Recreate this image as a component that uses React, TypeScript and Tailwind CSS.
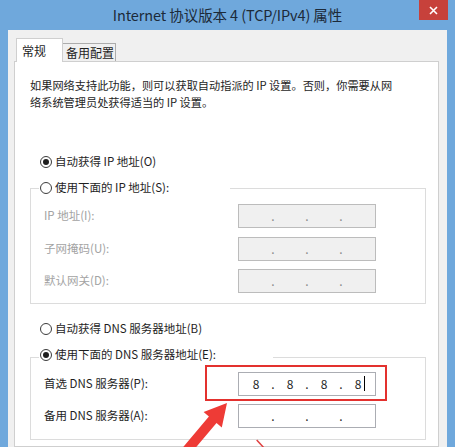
import React from "react";

const FONT = { fontFamily: '"Noto Sans CJK SC", "Noto Sans", sans-serif' };

function Radio({ checked }: { checked: boolean }) {
  return (
    <span className="w-[12px] h-[12px] rounded-full border border-[#3c3c3c] bg-white flex items-center justify-center shrink-0">
      {checked && <span className="w-[6px] h-[6px] rounded-full bg-[#1e1e1e]" />}
    </span>
  );
}

function IpBox({ values, disabled }: { values?: string[]; disabled?: boolean }) {
  const v = values ?? ["", "", "", ""];
  const dotColor = disabled ? "text-[#8a8a8a]" : "text-[#1e1e1e]";
  return (
    <div
      className={`w-[138px] h-[24px] border flex items-center text-[12px] ${
        disabled ? "bg-[#f0f0f0] border-[#bcbcbc]" : "bg-white border-[#abadb3]"
      }`}
    >
      {v.map((s, i) => (
        <React.Fragment key={i}>
          <div className="flex-1 flex justify-center items-center text-[#1e1e1e] relative">
            {s}
            {i === 3 && s && <span className="absolute right-[10px] top-[1px] w-[1px] h-[15px] bg-black" />}
          </div>
          {i < 3 && (
            <div className={`w-0 flex justify-center ${dotColor}`}>
              <span className="leading-none">.</span>
            </div>
          )}
        </React.Fragment>
      ))}
    </div>
  );
}

function Row({ label, disabled, values, mt }: { label: string; disabled?: boolean; values?: string[]; mt?: string }) {
  return (
    <div className={`flex items-center ${mt ?? ""}`}>
      <div className={`w-[194px] text-[11.5px] whitespace-nowrap ${disabled ? "text-[#a3a3a3]" : "text-[#1e1e1e]"}`}>
        {label}
      </div>
      <IpBox values={values} disabled={disabled} />
    </div>
  );
}

export default function App() {
  return (
    <div className="w-[455px] h-[447px] bg-[#6fa8dc] overflow-hidden flex flex-col relative" style={FONT}>
      {/* Title bar */}
      <div className="h-[30px] shrink-0 flex items-center justify-center relative">
        <span className="text-[14.5px] text-[#1c2a39] tracking-[-0.1px] whitespace-nowrap">
          Internet 协议版本 4 (TCP/IPv4) 属性
        </span>
        <div className="absolute right-[7px] top-0 w-[29px] h-[20px] bg-[#c7413b] flex items-center justify-center">
          <svg width="9" height="9" viewBox="0 0 9 9">
            <path d="M1 1 L8 8 M8 1 L1 8" stroke="white" strokeWidth="1.6" />
          </svg>
        </div>
      </div>

      {/* Client area */}
      <div className="flex-1 ml-[8px] w-[439px] bg-[#f0f0f0] pt-[8px] pl-[6px] flex flex-col">
        <div className="flex items-end h-[23px]">
          <div className="ml-[2px] w-[47px] h-[24px] mb-[-1px] bg-white border border-b-0 border-[#cfcfcf] relative z-10 pl-[5px] pt-[3px] text-[12px] text-[#1e1e1e]">
            常规
          </div>
          <div className="w-[53px] h-[18px] bg-[#f0f0f0] border border-b-0 border-l-0 border-[#acacac] pl-[3px] text-[12px] leading-[18px] text-[#1e1e1e]">
            备用配置
          </div>
        </div>
        <div className="w-[425px] flex-1 bg-white border border-[#cfcfcf] pl-[15px] pt-[15px]">
          <p className="text-[11.2px] leading-[17px] text-[#1e1e1e] whitespace-nowrap">
            如果网络支持此功能，则可以获取自动指派的 IP 设置。否则，你需要从网
            <br />
            络系统管理员处获得适当的 IP 设置。
          </p>

          <div className="mt-[41px] ml-[10px] h-[20px] flex items-center gap-[3px] text-[11.5px] text-[#1e1e1e]">
            <Radio checked />
            <span>自动获得 IP 地址(O)</span>
          </div>

          <div className="mt-[16px] w-[396px] border border-[#dcdcdc] relative pl-[13px] pt-[15px] pb-[10px]">
            <div className="absolute -top-[11px] left-[8px] w-[191px] h-[20px] bg-white pl-[1px] flex items-center gap-[3px] text-[11.5px] text-[#1e1e1e]">
              <Radio checked={false} />
              <span>使用下面的 IP 地址(S):</span>
            </div>
            <Row label="IP 地址(I):" disabled />
            <Row label="子网掩码(U):" disabled mt="mt-[9px]" />
            <Row label="默认网关(D):" disabled mt="mt-[8px]" />
          </div>

          <div className="mt-[15px] ml-[10px] h-[20px] flex items-center gap-[3px] text-[11.5px] text-[#1e1e1e]">
            <Radio checked={false} />
            <span>自动获得 DNS 服务器地址(B)</span>
          </div>

          <div className="mt-[18px] w-[396px] border border-[#dcdcdc] relative pl-[13px] pt-[14px] pb-[11px]">
            <div className="absolute -top-[13px] left-[8px] w-[234px] h-[20px] bg-white pl-[1px] flex items-center gap-[3px] text-[11.5px] text-[#1e1e1e]">
              <Radio checked />
              <span>使用下面的 DNS 服务器地址(E):</span>
            </div>
            <Row label="首选 DNS 服务器(P):" values={["8", "8", "8", "8"]} />
            <Row label="备用 DNS 服务器(A):" mt="mt-[8px]" />
          </div>
        </div>
      </div>

      {/* Red highlight box */}
      <div className="absolute left-[205px] top-[365px] w-[182px] h-[36px] border-2 border-[#e3312e] pointer-events-none" />

      {/* Red arrows */}
      <svg className="absolute left-0 top-0 pointer-events-none" width="455" height="447" viewBox="0 0 455 447">
        <polygon
          points="179.2,451.8 208.9,416.5 203.6,411.9 227,403 221.8,427.5 216.5,423 186.8,458.2"
          fill="#ee3b36"
        />
        <line x1="256.7" y1="440" x2="265" y2="449" stroke="#e04040" strokeWidth="1.5" />
      </svg>
    </div>
  );
}
